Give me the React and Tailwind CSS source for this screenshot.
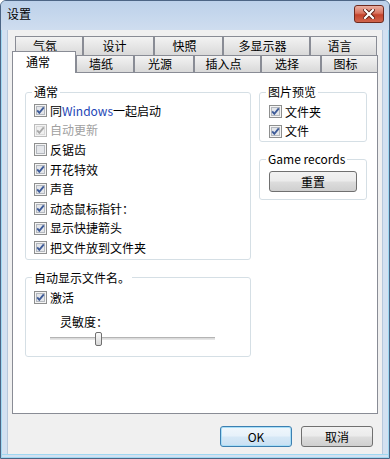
import React from "react";

const btnBg =
  "bg-[linear-gradient(#f2f2f2_0%,#ebebeb_48%,#dddddd_52%,#cfcfcf_100%)]";

function Check({ checked = true, disabled = false }) {
  return (
    <svg width="13" height="13" viewBox="0 0 13 13" className="shrink-0">
      <rect x="0.5" y="0.5" width="12" height="12" fill="#f4f4f4" stroke={disabled ? "#bcbcbc" : "#8e8f8f"} />
      <rect x="2.5" y="2.5" width="8" height="8" fill={disabled ? "#f0f0f0" : "#e4e6ea"} stroke={disabled ? "#d8d8d8" : "#b4b8be"} />
      {checked && (
        <path
          d="M3.2 6.4 L5.3 8.8 L9.8 3.4"
          fill="none"
          stroke={disabled ? "#a8a8a8" : "#3f5c99"}
          strokeWidth="1.9"
        />
      )}
    </svg>
  );
}

function Row({ children, checked, disabled }) {
  return (
    <div className="flex h-[19.6px] items-center gap-[3px]">
      <Check checked={checked} disabled={disabled} />
      <span className={disabled ? "text-[#a0a0a0]" : ""}>{children}</span>
    </div>
  );
}

function Group({ title, className = "", children }) {
  return (
    <fieldset className={"rounded-[3px] border border-[#d5dfe5] " + className}>
      <legend className="ml-[6px] px-[2px] leading-[16px]">{title}</legend>
      {children}
    </fieldset>
  );
}

function Tab({ w, children }) {
  return (
    <div
      className="flex h-full items-center justify-center border-l border-r border-t border-[#898c95] bg-linear-to-b from-[#f3f3f3] to-[#d9d9d9] pr-[8px]"
      style={{ width: w }}
    >
      {children}
    </div>
  );
}

export default function App() {
  return (
    <div className="flex h-[459px] w-[390px] flex-col overflow-hidden rounded-t-[6px] border border-[#4c6585] bg-[#d3e1f1] font-['Noto_Sans_CJK_SC','Liberation_Sans',sans-serif] text-[12px] leading-[16px] text-black shadow-[inset_0_0_0_1px_#9fd8f2]">
      {/* title bar */}
      <div className="flex h-[29px] shrink-0 items-start bg-linear-to-b from-[#bcd1ea] to-[#cfddef] pl-[6px] pr-[5px]">
        <span className="mt-[5px] text-[12px]">设置</span>
        <div className="ml-auto mt-[4px] flex h-[18px] w-[30px] items-center justify-center rounded-[3px] border border-[#6e2a1f] bg-[linear-gradient(#eab0a2_0%,#d9735f_45%,#c4432c_55%,#d0654d_100%)]">
          <svg width="12" height="10" viewBox="0 0 12 10">
            <path d="M2 1 L10 9 M10 1 L2 9" stroke="#5b1c12" strokeWidth="4" strokeLinecap="square" />
            <path d="M2 1 L10 9 M10 1 L2 9" stroke="#ffffff" strokeWidth="2.2" strokeLinecap="square" />
          </svg>
        </div>
      </div>

      {/* body */}
      <div className="mx-[6px] flex flex-1 flex-col border-l border-r border-[#b7c8dc] bg-[#f0f0f0] px-[4px] pt-[6px]">
        {/* tabs */}
        <div className="ml-[3px] flex h-[19px] items-end">
          <Tab w={68}>气氛</Tab>
          <Tab w={71}>设计</Tab>
          <Tab w={69}>快照</Tab>
          <Tab w={87}>多显示器</Tab>
          <Tab w={67}>语言</Tab>
        </div>
        <div className="flex h-[17px] items-end">
          <div className="relative z-10 -mb-px flex h-[22px] w-[64px] items-start justify-center border-l border-r border-t border-[#898c95] bg-white pr-[12px] pt-[2px]">
            通常
          </div>
          <Tab w={58}>墙纸</Tab>
          <Tab w={60}>光源</Tab>
          <Tab w={67}>插入点</Tab>
          <Tab w={60}>选择</Tab>
          <Tab w={57}>图标</Tab>
        </div>

        {/* panel */}
        <div className="flex h-[342px] shrink-0 gap-[8px] border border-[#898c95] bg-white pl-[12px] pt-[11px]">
          <div className="flex w-[226px] flex-col">
            <Group title="通常" className="pb-px">
              <div className="pl-[8px] pt-px">
                <Row>
                  同<span className="text-[#2446b6]">Windows</span>一起启动
                </Row>
                <Row disabled>自动更新</Row>
                <Row checked={false}>反锯齿</Row>
                <Row>开花特效</Row>
                <Row>声音</Row>
                <Row>动态鼠标指针：</Row>
                <Row>显示快捷箭头</Row>
                <Row>把文件放到文件夹</Row>
              </div>
            </Group>
            <Group title="自动显示文件名。" className="mt-[10px] pb-[10px]">
              <div className="pl-[8px] pt-[2px]">
                <Row>激活</Row>
                <div className="ml-[26px] mt-[7px]">灵敏度：</div>
                <div className="relative ml-[16px] mt-[2px] h-[14px] w-[165px]">
                  <div className="absolute left-0 right-0 top-[5px] h-[3px] border-t border-[#b4b4b4] border-b border-b-[#e6e6e6] bg-[#dcdcdc]" />
                  <div className="absolute left-[45px] top-0 h-[14px] w-[7px] rounded-[2px] border border-[#707070] bg-linear-to-b from-[#fbfbfb] to-[#d8d8d8]" />
                </div>
              </div>
            </Group>
          </div>

          <div className="flex w-[108px] flex-col">
            <Group title="图片预览">
              <div className="pl-[9px] pt-[2px]">
                <Row>文件夹</Row>
                <Row>文件</Row>
              </div>
            </Group>
            <Group title="Game records" className="mt-[9px] pb-[7px]">
              <div
                className={
                  "ml-[9px] mt-[4px] flex h-[21px] w-[88px] items-center justify-center rounded-[3px] border border-[#707070] " +
                  btnBg
                }
              >
                重置
              </div>
            </Group>
          </div>
        </div>

        {/* buttons */}
        <div className="mt-[12px] flex justify-end gap-[9px] pr-[5px]">
          <div className="flex h-[21px] w-[72px] items-center justify-center rounded-[3px] border border-[#3c7fb1] bg-[linear-gradient(#f0f7fc_0%,#e6f1fa_48%,#d6e8f6_52%,#c8e0f3_100%)] shadow-[inset_0_0_0_1px_#a8def7]">
            OK
          </div>
          <div
            className={
              "flex h-[21px] w-[72px] items-center justify-center rounded-[3px] border border-[#707070] " +
              btnBg
            }
          >
            取消
          </div>
        </div>
      </div>
      <div className="h-[4px] shrink-0 border-t border-[#9fd8f2]" />
    </div>
  );
}
